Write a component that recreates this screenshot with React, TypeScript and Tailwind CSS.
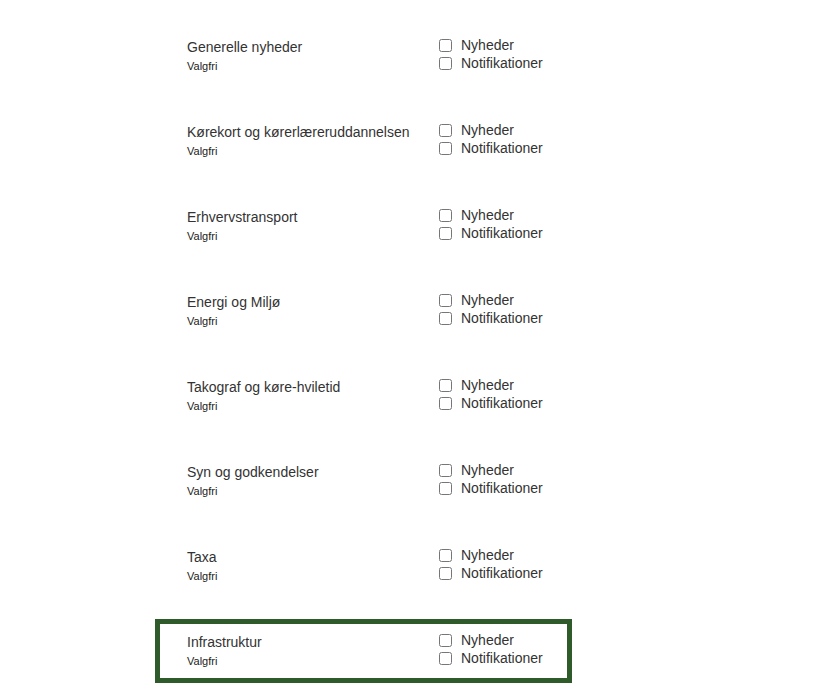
const topics = [
  'Generelle nyheder',
  'Kørekort og kørerlæreruddannelsen',
  'Erhvervstransport',
  'Energi og Miljø',
  'Takograf og køre-hviletid',
  'Syn og godkendelser',
  'Taxa',
  'Infrastruktur',
]

function TopicRow({ title, active }: { title: string; active?: boolean }) {
  return (
    <div
      className={`flex h-[64px] w-[417px] border-[5px] pl-[27px] pt-[7px] mb-[21px] ${
        active ? 'border-[#2f5a2a]' : 'border-transparent'
      }`}
    >
      <div className="w-[252px] pt-[2px]">
        <div className="text-[14px] leading-[18px] text-[#333]">{title}</div>
        <div className="text-[11px] leading-[14px] mt-[3px] text-[#222]">Valgfri</div>
      </div>
      <div className="flex flex-col">
        {['Nyheder', 'Notifikationer'].map(label => (
          <label key={label} className="flex items-center h-[18px] text-[14px] text-[#333]">
            <input type="checkbox" className="m-0 w-[13px] h-[13px]" />
            <span className="ml-[9px]">{label}</span>
          </label>
        ))}
      </div>
    </div>
  )
}

export default function App() {
  return (
    <div className="min-h-[694px] bg-white pt-[24px] pl-[155px] font-['Liberation_Sans',Arial,sans-serif]">
      {topics.map((t, i) => (
        <TopicRow key={t} title={t} active={i === topics.length - 1} />
      ))}
    </div>
  )
}
